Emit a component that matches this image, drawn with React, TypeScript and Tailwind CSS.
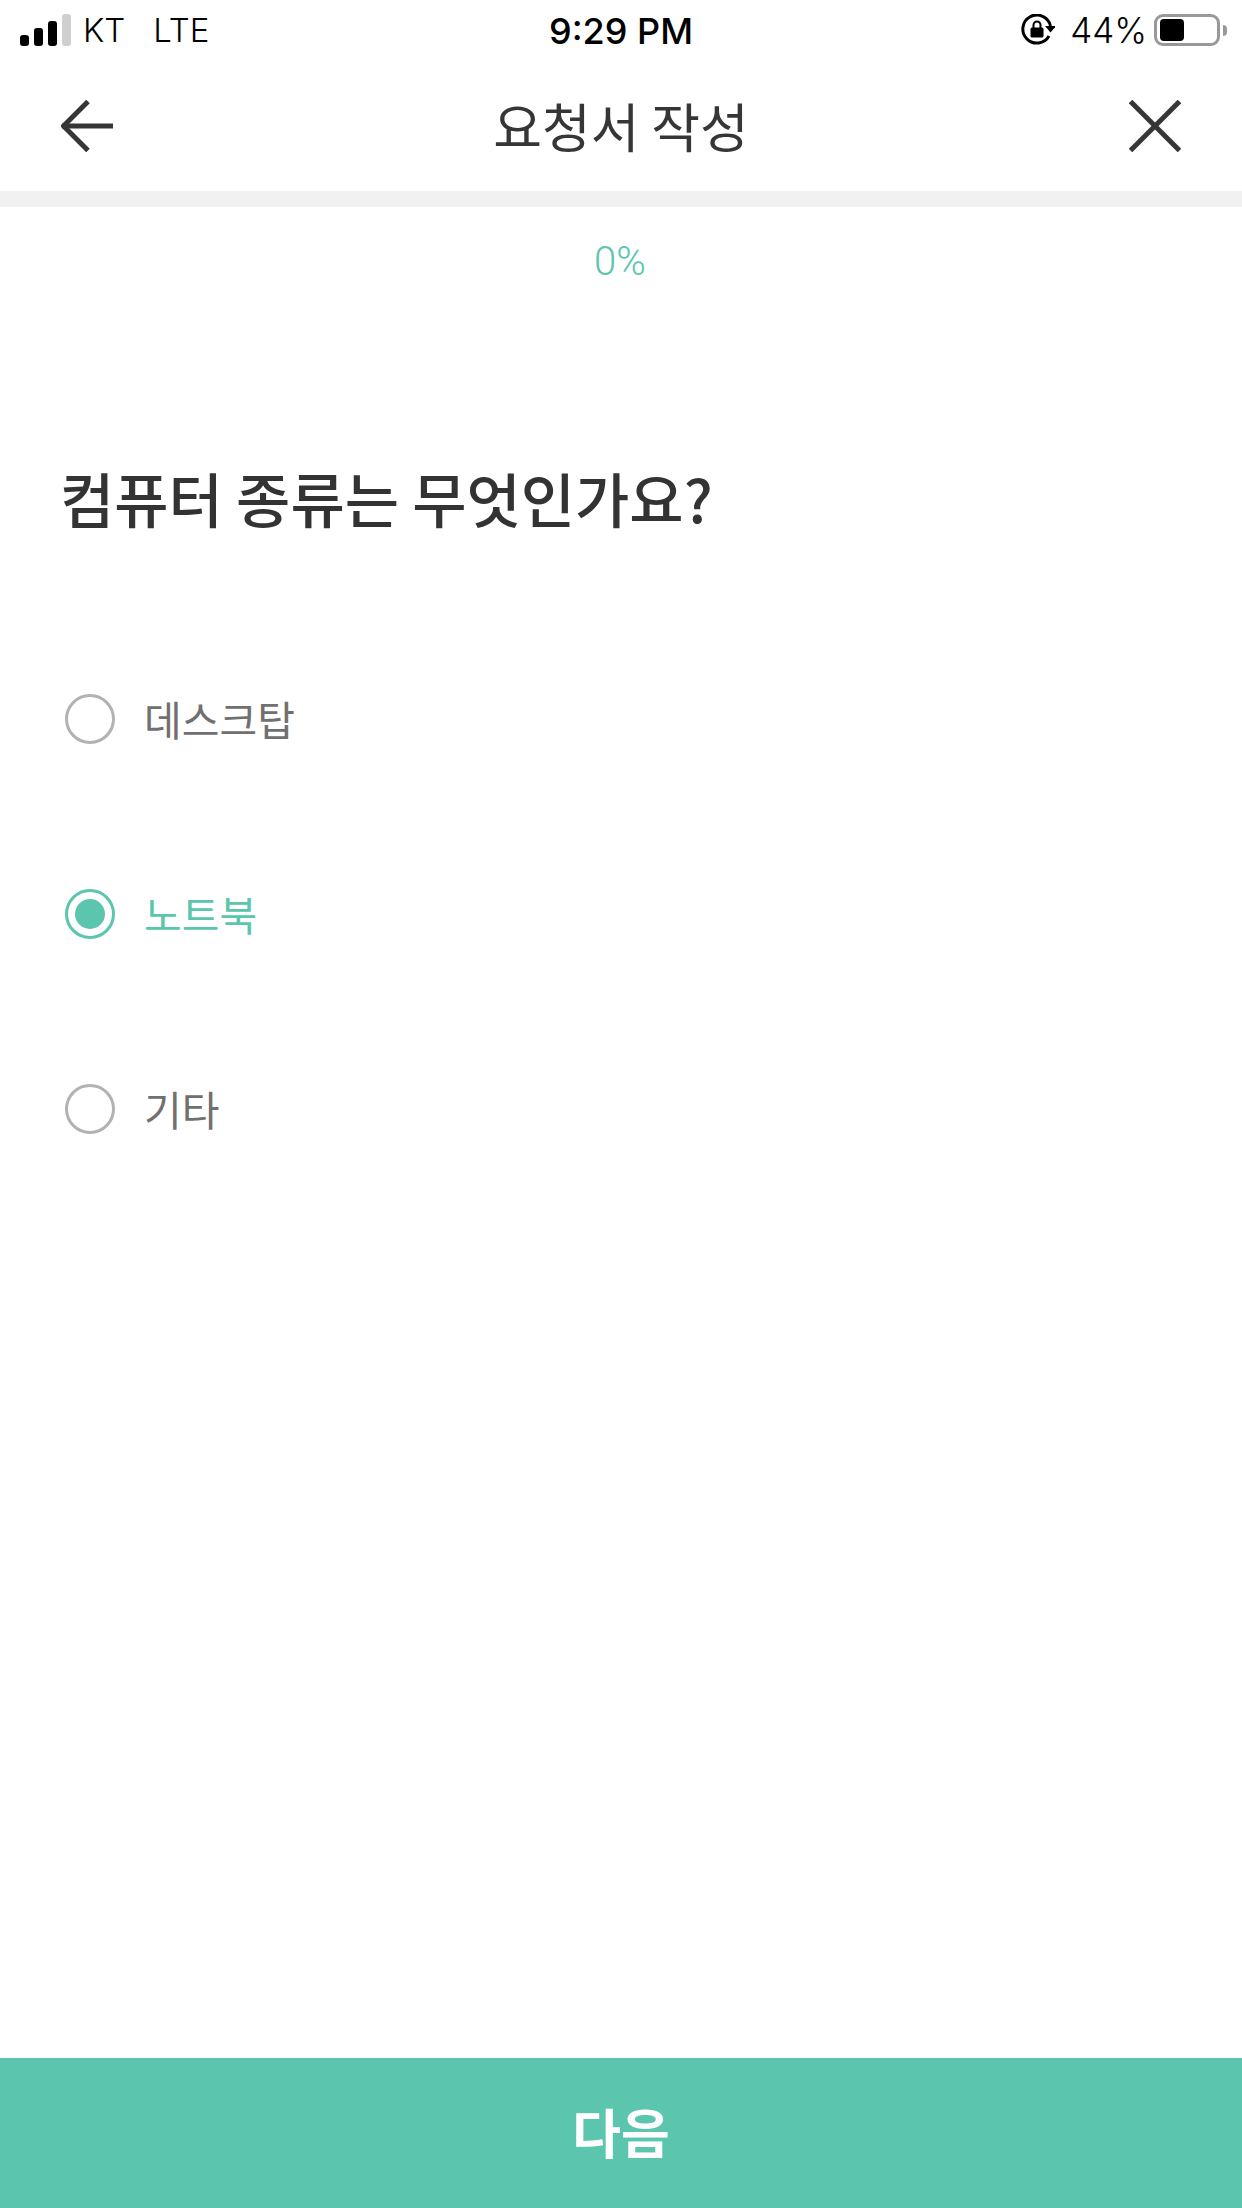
import { useState } from "react";

const FONT = "font-['Noto_Sans_CJK_KR','Noto_Sans',sans-serif]";
const OPTIONS = ["데스크탑", "노트북", "기타"];

function StatusBar() {
  return (
    <div className="relative flex h-[60px] items-center justify-between pl-5 pr-[15px] font-['Inter',sans-serif] text-[33px] text-black">
      <div className="flex items-center">
        <div className="flex h-8 items-end gap-[5px]">
          <span className="h-[11px] w-[9px] rounded-[3px] bg-black" />
          <span className="h-[18px] w-[9px] rounded-[3px] bg-black" />
          <span className="h-[25px] w-[9px] rounded-[3px] bg-black" />
          <span className="h-8 w-[9px] rounded-[3px] bg-[#cfcfcf]" />
        </div>
        <span className="ml-[12px] mt-[2px] font-light">KT</span>
        <span className="ml-[28px] mt-[2px] font-light">LTE</span>
      </div>
      <span className="absolute left-1/2 top-[9px] -translate-x-1/2 text-[36px] font-medium leading-[44px]">9:29 PM</span>
      <div className="flex items-center">
        <svg width="34" height="32" viewBox="0 0 34 32" fill="none">
          <path d="M28 22A14 14 0 1 1 29.500 12" stroke="#000" strokeWidth="3" />
          <path d="M24 12h11l-5.500 6.500z" fill="#000" />
          <rect x="9.500" y="13.500" width="13" height="10" rx="1.500" fill="#000" />
          <path d="M12.500 14v-3a3.500 3.500 0 0 1 7 0v3" stroke="#000" strokeWidth="2" />
        </svg>
        <span className="ml-[15px] text-[35px] font-light leading-none">44%</span>
        <div className="ml-[7px] flex h-8 w-[66px] items-center rounded-[9px] border-[3px] border-[#999999] p-[3px]">
          <div className="h-[22px] w-[24px] rounded-[4px] bg-black" />
        </div>
        <span className="ml-[3px] h-[11px] w-[4px] rounded-r-full bg-[#999999]" />
      </div>
    </div>
  );
}

function NavBar() {
  return (
    <div className="flex h-[131px] items-center justify-between pl-[61px] pr-[61px]">
      <svg width="52" height="52" viewBox="0 0 52 52" fill="none" stroke="#363636" strokeWidth="5">
        <path d="M1 26H52" />
        <path d="M27 1.500L2.500 26L27 50.500" />
      </svg>
      <h1 className="text-[53px] leading-none text-[#363636]">요청서 작성</h1>
      <svg width="52" height="52" viewBox="0 0 52 52" fill="none" stroke="#363636" strokeWidth="5">
        <path d="M1.500 1.500L50.500 50.500" />
        <path d="M50.500 1.500L1.500 50.500" />
      </svg>
    </div>
  );
}

function Radio({ label, checked, onClick }: { label: string; checked: boolean; onClick: () => void }) {
  return (
    <button onClick={onClick} className="flex h-[50px] items-center gap-[29px] text-left">
      <span
        className={`flex h-[50px] w-[50px] items-center justify-center rounded-full border-[3px] ${
          checked ? "border-[#5bc5ae]" : "border-[#b2b2b2]"
        }`}
      >
        {checked && <span className="h-[30px] w-[30px] rounded-full bg-[#5bc5ae]" />}
      </span>
      <span className={`pb-[2px] text-[41px] leading-none ${checked ? "text-[#5bc5ae]" : "text-[#707070]"}`}>{label}</span>
    </button>
  );
}

export default function App() {
  const [selected, setSelected] = useState(1);

  return (
    <div className={`flex h-[2208px] w-[1242px] flex-col overflow-hidden bg-white ${FONT}`}>
      <StatusBar />
      <NavBar />
      <div className="h-4 bg-[#f1f1f1]" />

      <div className="flex-1 pl-[60px] pr-[62px]">
        <p className="mt-[30px] text-center font-['Roboto',sans-serif] text-[40px] font-light leading-[50px] text-[#5bc5ae]">0%</p>
        <h2 className="mt-[171px] text-[59px] font-medium leading-[80px] text-[#333333]">컴퓨터 종류는 무엇인가요?</h2>
        <div className="mt-[156px] flex flex-col gap-[145px] pl-[5px]">
          {OPTIONS.map((label, i) => (
            <Radio key={label} label={label} checked={selected === i} onClick={() => setSelected(i)} />
          ))}
        </div>
      </div>

      <button className="h-[150px] bg-[#5bc5ae] pb-[3px] text-[53px] font-bold text-white">다음</button>
    </div>
  );
}
